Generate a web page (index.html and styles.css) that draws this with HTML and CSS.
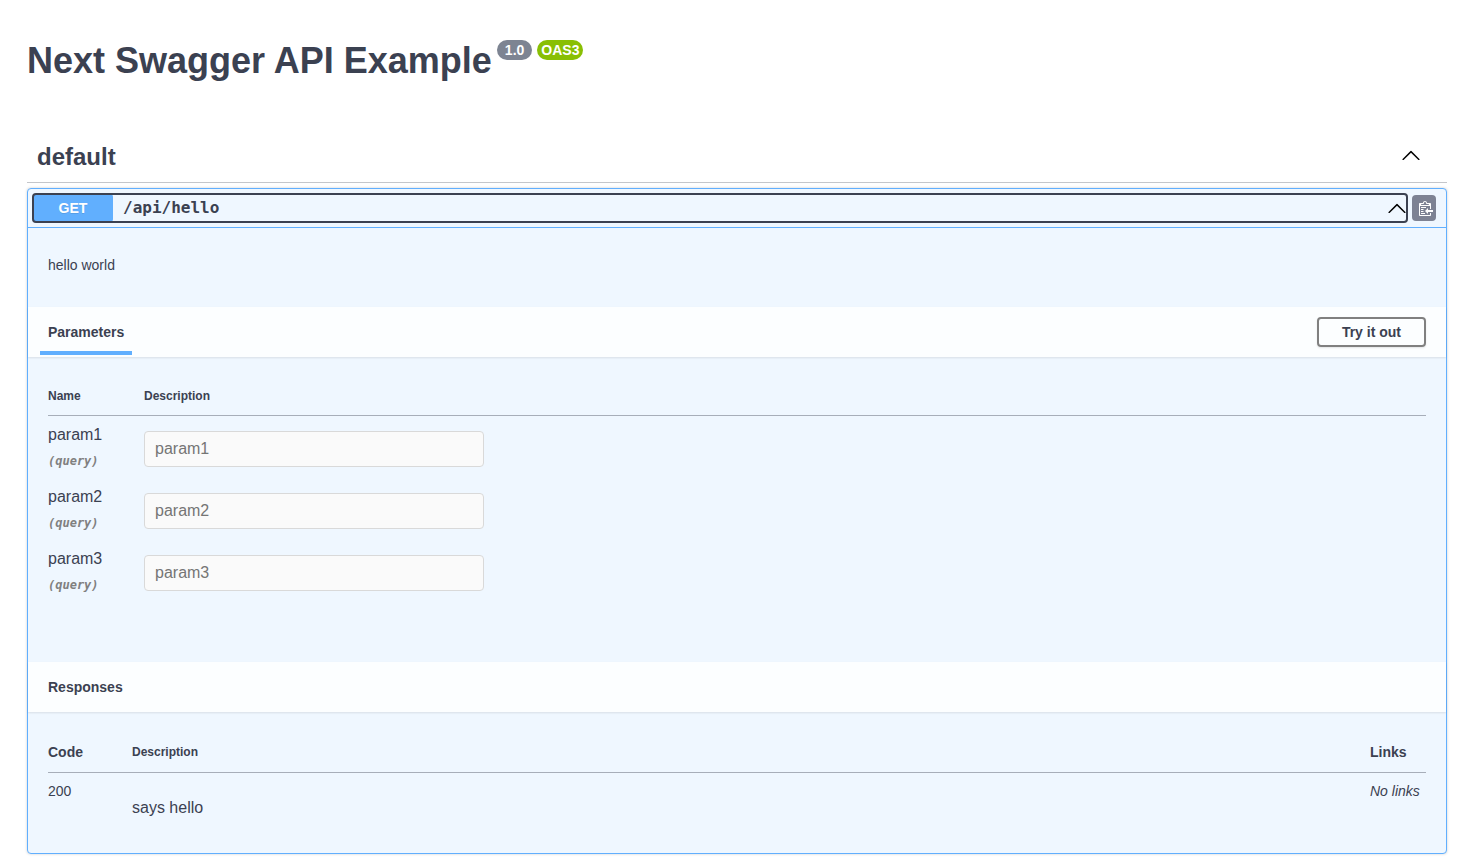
FILE: index.html
```
<!DOCTYPE html>
<html lang="en">
<head>
<meta charset="utf-8">
<title>Next Swagger API Example</title>
<link rel="stylesheet" href="styles.css">
</head>
<body>
<main class="wrapper">
  <header class="info">
    <h1 class="title">Next Swagger API Example</h1>
    <span class="badge">1.0</span>
    <span class="badge badge-oas">OAS3</span>
  </header>

  <section>
    <div class="tag">
      <h2 class="tag-name">default</h2>
      <button class="icon-button" type="button" aria-label="Collapse operation">
        <svg class="arrow" viewBox="0 0 20 20"><path d="M17.418 14.908c.272.281.701.281.968 0a.753.753 0 0 0 0-1l-7.908-7.83a.66.66 0 0 0-.967 0l-7.91 7.83a.753.753 0 0 0 0 1c.27.281.701.281.969 0L10 7.767l7.418 7.141z"/></svg>
      </button>
    </div>

    <article class="opblock">
      <div class="summary">
        <button class="summary-control" type="button" aria-expanded="true">
          <span class="method">GET</span>
          <span class="path">/api/hello</span>
          <svg class="arrow" viewBox="0 0 20 20"><path d="M17.418 14.908c.272.281.701.281.968 0a.753.753 0 0 0 0-1l-7.908-7.83a.66.66 0 0 0-.967 0l-7.91 7.83a.753.753 0 0 0 0 1c.27.281.701.281.969 0L10 7.767l7.418 7.141z"/></svg>
        </button>
        <button class="copy" type="button" aria-label="Copy to clipboard">
          <svg width="14" height="16" viewBox="0 0 14 16"><path fill="#fff" fill-rule="evenodd" d="M2 13h4v1H2v-1zm5-6H2v1h5V7zm2 3V8l-3 3 3 3v-2h5v-2H9zM4.500 9H2v1h2.500V9zM2 12h2.500v-1H2v1zm9 1h1v2c-.020.280-.110.520-.300.700-.190.180-.420.280-.700.300H1c-.550 0-1-.450-1-1V4c0-.550.450-1 1-1h3c0-1.110.890-2 2-2 1.110 0 2 .890 2 2h3c.550 0 1 .450 1 1v5h-1V6H1v9h10v-2zM2 5h8c0-.550-.450-1-1-1H8c-.550 0-1-.450-1-1s-.450-1-1-1-1 .450-1 1-.450 1-1 1H3c-.550 0-1 .450-1 1z"/></svg>
        </button>
      </div>

      <p class="description">hello world</p>

      <div class="section-header">
        <h3 class="section-title section-title-active">Parameters</h3>
        <button class="try" type="button">Try it out</button>
      </div>
      <div class="section-body section-body-params">
        <table class="table">
          <thead>
            <tr><th class="col-name">Name</th><th>Description</th></tr>
          </thead>
          <tbody>
            <tr class="param">
              <td><label class="param-name" for="p1">param1</label><div class="param-in">(query)</div></td>
              <td><input class="param-input" id="p1" type="text" placeholder="param1" disabled></td>
            </tr>
            <tr class="param">
              <td><label class="param-name" for="p2">param2</label><div class="param-in">(query)</div></td>
              <td><input class="param-input" id="p2" type="text" placeholder="param2" disabled></td>
            </tr>
            <tr class="param">
              <td><label class="param-name" for="p3">param3</label><div class="param-in">(query)</div></td>
              <td><input class="param-input" id="p3" type="text" placeholder="param3" disabled></td>
            </tr>
          </tbody>
        </table>
      </div>

      <div class="section-header">
        <h3 class="section-title">Responses</h3>
      </div>
      <div class="section-body">
        <table class="table">
          <thead>
            <tr><th class="col-code">Code</th><th>Description</th><th class="col-links">Links</th></tr>
          </thead>
          <tbody>
            <tr><td>200</td><td class="response-text">says hello</td><td><i>No links</i></td></tr>
          </tbody>
        </table>
      </div>
    </article>
  </section>
</main>
</body>
</html>
```
FILE: styles.css
```
* {
  box-sizing: border-box;
}

body {
  margin: 0;
  background: #fff;
  color: #3b4151;
  font: 14px/16px "Liberation Sans", Arial, sans-serif;
}

h1, h2, h3, p {
  margin: 0;
}

button {
  padding: 0;
  border: 0;
  background: none;
  color: inherit;
  font: inherit;
  cursor: pointer;
}

svg {
  display: block;
}

.wrapper {
  padding: 40px 18px 12px 27px;
}

.info {
  display: flex;
  align-items: flex-start;
  gap: 5px;
  margin-bottom: 50px;
}

.title {
  font-size: 36px;
  line-height: 41px;
}

.badge {
  padding: 2px 8px;
  border-radius: 20px;
  background: #7d8492;
  color: #fff;
  font-weight: 700;
}

.badge-oas {
  padding: 2px 4px;
  background: #89bf04;
}

.tag {
  display: flex;
  align-items: center;
  justify-content: space-between;
  margin-bottom: 5px;
  padding: 10px 26px 10px 10px;
  border-bottom: 1px solid rgba(59, 65, 81, .3);
}

.tag-name {
  font-size: 24px;
  line-height: 31px;
}

.icon-button {
  padding-bottom: 4px;
}

.arrow {
  width: 20px;
  height: 20px;
  fill: #000;
}

.opblock {
  border: 1px solid #61affe;
  border-radius: 4px;
  background: #eff7ff;
  box-shadow: 0 0 3px rgba(0, 0, 0, .19);
}

.summary {
  display: flex;
  align-items: center;
  gap: 5px;
  padding: 5px 10px 5px 5px;
  border-bottom: 1px solid #61affe;
}

.summary-control {
  display: flex;
  flex: 1;
  align-items: center;
  border-radius: 3px;
  outline: 2px solid #3b4151;
  outline-offset: -1px;
  text-align: left;
}

.method {
  width: 80px;
  padding: 6px 0;
  border-radius: 3px;
  background: #61affe;
  color: #fff;
  font-weight: 700;
  text-align: center;
  text-shadow: 0 1px 0 rgba(0, 0, 0, .1);
}

.path {
  flex: 1;
  padding: 0 10px;
  font: 700 16px/18px "DejaVu Sans Mono", monospace;
}

.copy {
  display: flex;
  align-items: center;
  justify-content: center;
  width: 24px;
  height: 26px;
  padding-left: 4px;
  border-radius: 4px;
  background: #7d8293;
}

.description {
  padding: 29px 20px 34px;
}

.section-header {
  display: flex;
  align-items: flex-start;
  justify-content: space-between;
  min-height: 50px;
  padding: 0 20px 0 12px;
  background: rgba(255, 255, 255, .8);
  box-shadow: 0 1px 2px rgba(0, 0, 0, .1);
}

.section-title {
  padding: 17px 8px;
  font-size: 14px;
  line-height: 16px;
}

.section-title-active {
  padding-bottom: 11px;
  border-bottom: 4px solid #61affe;
}

.try {
  align-self: center;
  padding: 5px 23px;
  border: 2px solid #808080;
  border-radius: 4px;
  box-shadow: 0 1px 2px rgba(0, 0, 0, .1);
  font-weight: 700;
}

.section-body {
  padding: 20px;
}

.section-body-params {
  padding-bottom: 60px;
}

.table {
  width: 100%;
  border-collapse: separate;
  border-spacing: 0;
}

.table th {
  padding: 12px 0;
  border-bottom: 1px solid rgba(59, 65, 81, .4);
  font-size: 12px;
  line-height: 14px;
  text-align: left;
}

.table td {
  padding: 10px 0 0;
  vertical-align: top;
}

.table .col-name {
  width: 96px;
}

.table .col-code,
.table .col-links {
  width: 84px;
  font-size: 14px;
  line-height: 16px;
}

.table .col-links {
  width: 56px;
}

.param {
  height: 62px;
}

.param-name {
  display: block;
  font-size: 16px;
  line-height: 18px;
}

.param-in {
  margin-top: 10px;
  color: #808080;
  font: italic 700 12px/14px "DejaVu Sans Mono", monospace;
}

.param-input {
  display: block;
  width: 340px;
  max-width: 100%;
  height: 36px;
  margin-top: 5px;
  padding: 0 10px;
  border: 1px solid #d9d9d9;
  border-radius: 4px;
  background: #fafafa;
  font: 16px "Liberation Sans", Arial, sans-serif;
}

.param-input::placeholder {
  color: #757575;
}

.table .response-text {
  padding: 26px 0 16px;
  font-size: 16px;
  line-height: 18px;
}
```
